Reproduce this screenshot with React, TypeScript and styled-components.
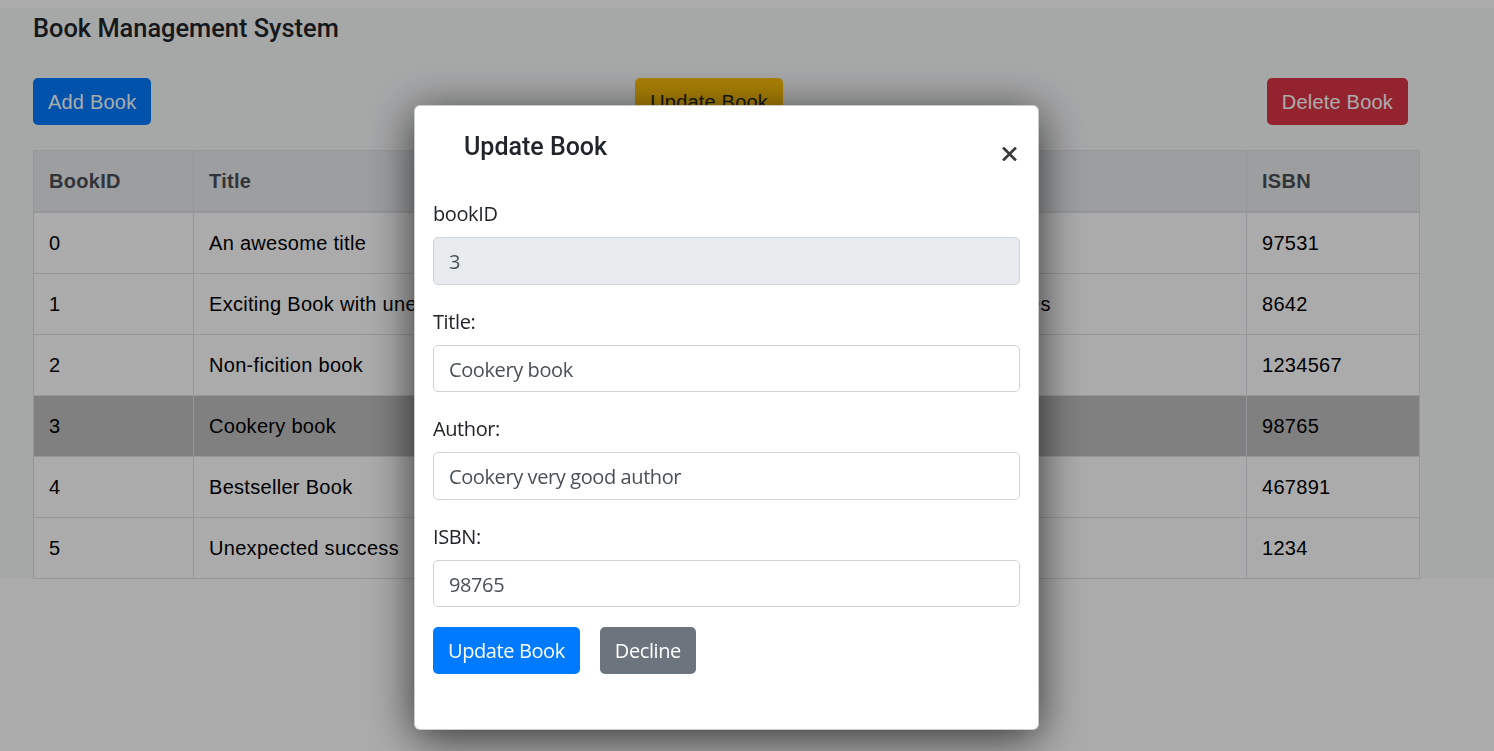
import React from "react";
import styled, { createGlobalStyle, css } from "styled-components";

const GlobalStyle = createGlobalStyle`
  html, body {
    margin: 0;
    padding: 0;
  }
  body {
    padding-top: 8px;
    background: #ffffff;
    font-family: "Open Sans", "Noto Sans", Arial, sans-serif;
    color: #212529;
  }
  * { box-sizing: border-box; }
`;

const Page = styled.main`
  background: #f8f9fa;
  padding: 0 74px 0 33px;
`;

const Heading = styled.h1`
  margin: 0;
  padding-top: 5px;
  font-family: Roboto, "Liberation Sans", sans-serif;
  font-weight: 500;
  font-size: 25.4px;
  line-height: 31px;
  color: #212529;
`;

const Toolbar = styled.div`
  display: flex;
  justify-content: space-between;
  margin: 34px 12px 0 0;
`;

type Variant = "primary" | "warning" | "danger" | "secondary";

const variantColors: Record<Variant, { bg: string; fg: string }> = {
  primary: { bg: "#007bff", fg: "#ffffff" },
  warning: { bg: "#ffc107", fg: "#212529" },
  danger: { bg: "#dc3545", fg: "#ffffff" },
  secondary: { bg: "#6c757d", fg: "#ffffff" },
};

const buttonBase = css<{ $variant: Variant }>`
  display: inline-flex;
  align-items: center;
  justify-content: center;
  height: 47px;
  padding: 0 15px;
  border: none;
  border-radius: 5px;
  font-size: 20px;
  line-height: 30px;
  cursor: pointer;
  background: ${(p) => variantColors[p.$variant].bg};
  color: ${(p) => variantColors[p.$variant].fg};
`;

const PageButton = styled.button<{ $variant: Variant }>`
  ${buttonBase};
  font-family: "Liberation Sans", Arial, sans-serif;
  letter-spacing: 0.2px;
`;

const Table = styled.table`
  width: 100%;
  margin-top: 25px;
  border-collapse: collapse;
  background: #ffffff;
  font-family: "Liberation Sans", Arial, sans-serif;
  font-size: 20px;
  line-height: 30px;
  letter-spacing: 0.3px;
  color: #000000;
`;

const HeadCell = styled.th<{ $w?: number }>`
  text-align: left;
  padding: 15px;
  border: 1px solid #dee2e6;
  border-bottom-width: 2px;
  background: #e9ecef;
  color: #495057;
  font-weight: 700;
  width: ${(p) => (p.$w ? `${p.$w}px` : "auto")};
`;

const Row = styled.tr<{ $selected?: boolean }>`
  background: ${(p) => (p.$selected ? "#bfbfbf" : "#ffffff")};
`;

const Cell = styled.td`
  padding: 15px;
  border: 1px solid #dee2e6;
  white-space: nowrap;
`;

const Backdrop = styled.div`
  position: fixed;
  inset: 0;
  background: rgba(0, 0, 0, 0.33);
`;

const Dialog = styled.div`
  position: fixed;
  top: 105px;
  left: 414px;
  width: 625px;
  background: #ffffff;
  border: 1px solid rgba(0, 0, 0, 0.2);
  border-radius: 6px;
  box-shadow: 0 8px 45px rgba(0, 0, 0, 0.7);
`;

const DialogHeader = styled.div`
  display: flex;
  justify-content: space-between;
  align-items: flex-start;
  height: 71px;
  padding: 26px 21px 0 20px;
`;

const DialogTitle = styled.h5`
  margin: 0;
  padding-left: 29px;
  font-family: Roboto, "Liberation Sans", sans-serif;
  font-weight: 500;
  font-size: 25px;
  line-height: 30px;
  color: #212529;
`;

const CloseButton = styled.button`
  margin-top: 15px;
  width: 15px;
  height: 14px;
  padding: 0;
  border: none;
  background: transparent;
  color: #3a3a3a;
  cursor: pointer;
  display: flex;
`;

const DialogBody = styled.form`
  padding: 20px 18px 55px 18px;
`;

const Field = styled.div`
  margin-bottom: 20px;
`;

const Label = styled.label`
  display: block;
  margin-bottom: 10px;
  padding-top: 2px;
  height: 30px;
  font-size: 20px;
  line-height: 30px;
  letter-spacing: -0.4px;
  color: #212529;
`;

const Input = styled.input`
  display: block;
  width: 100%;
  height: 47.5px;
  padding: 2px 15px 0;
  font-family: inherit;
  font-size: 20px;
  letter-spacing: -0.4px;
  color: #495057;
  background: #ffffff;
  border: 1px solid #ced4da;
  border-radius: 5px;
  outline: none;
  &:disabled {
    background: #e9ecef;
  }
`;

const ButtonRow = styled.div`
  display: flex;
  gap: 20px;
`;

const ActionButton = styled.button<{ $variant: Variant }>`
  ${buttonBase};
  font-family: "Open Sans", "Noto Sans", sans-serif;
  letter-spacing: -0.4px;
`;

const books = [
  { id: 0, title: "An awesome title", author: "Awesome author", isbn: "97531" },
  { id: 1, title: "Exciting Book with unexpected ending", author: "Writer of many exciting and thrilling adventures", isbn: "8642" },
  { id: 2, title: "Non-ficition book", author: "Famous writer", isbn: "1234567" },
  { id: 3, title: "Cookery book", author: "Cookery very good author", isbn: "98765" },
  { id: 4, title: "Bestseller Book", author: "Bestseller author", isbn: "467891" },
  { id: 5, title: "Unexpected success", author: "Unknown author", isbn: "1234" },
];

export default function App() {
  return (
    <>
      <GlobalStyle />
      <Page>
        <Heading>Book Management System</Heading>
        <Toolbar>
          <PageButton $variant="primary">Add Book</PageButton>
          <PageButton $variant="warning">Update Book</PageButton>
          <PageButton $variant="danger">Delete Book</PageButton>
        </Toolbar>
        <Table>
          <thead>
            <tr>
              <HeadCell $w={160}>BookID</HeadCell>
              <HeadCell $w={412}>Title</HeadCell>
              <HeadCell>Author</HeadCell>
              <HeadCell $w={173}>ISBN</HeadCell>
            </tr>
          </thead>
          <tbody>
            {books.map((b) => (
              <Row key={b.id} $selected={b.id === 3}>
                <Cell>{b.id}</Cell>
                <Cell>{b.title}</Cell>
                <Cell>{b.author}</Cell>
                <Cell>{b.isbn}</Cell>
              </Row>
            ))}
          </tbody>
        </Table>
      </Page>
      <Backdrop />
      <Dialog role="dialog">
        <DialogHeader>
          <DialogTitle>Update Book</DialogTitle>
          <CloseButton type="button" aria-label="Close">
            <svg width="15" height="14" viewBox="0 0 15 14">
              <path d="M2 1.5 L13 12.5 M13 1.5 L2 12.5" stroke="currentColor" strokeWidth="2.7" strokeLinecap="square" />
            </svg>
          </CloseButton>
        </DialogHeader>
        <DialogBody onSubmit={(e) => e.preventDefault()}>
          <Field>
            <Label>bookID</Label>
            <Input value="3" disabled readOnly />
          </Field>
          <Field>
            <Label>Title:</Label>
            <Input defaultValue="Cookery book" />
          </Field>
          <Field>
            <Label>Author:</Label>
            <Input defaultValue="Cookery very good author" />
          </Field>
          <Field>
            <Label>ISBN:</Label>
            <Input defaultValue="98765" />
          </Field>
          <ButtonRow>
            <ActionButton type="submit" $variant="primary">Update Book</ActionButton>
            <ActionButton type="button" $variant="secondary">Decline</ActionButton>
          </ButtonRow>
        </DialogBody>
      </Dialog>
    </>
  );
}
